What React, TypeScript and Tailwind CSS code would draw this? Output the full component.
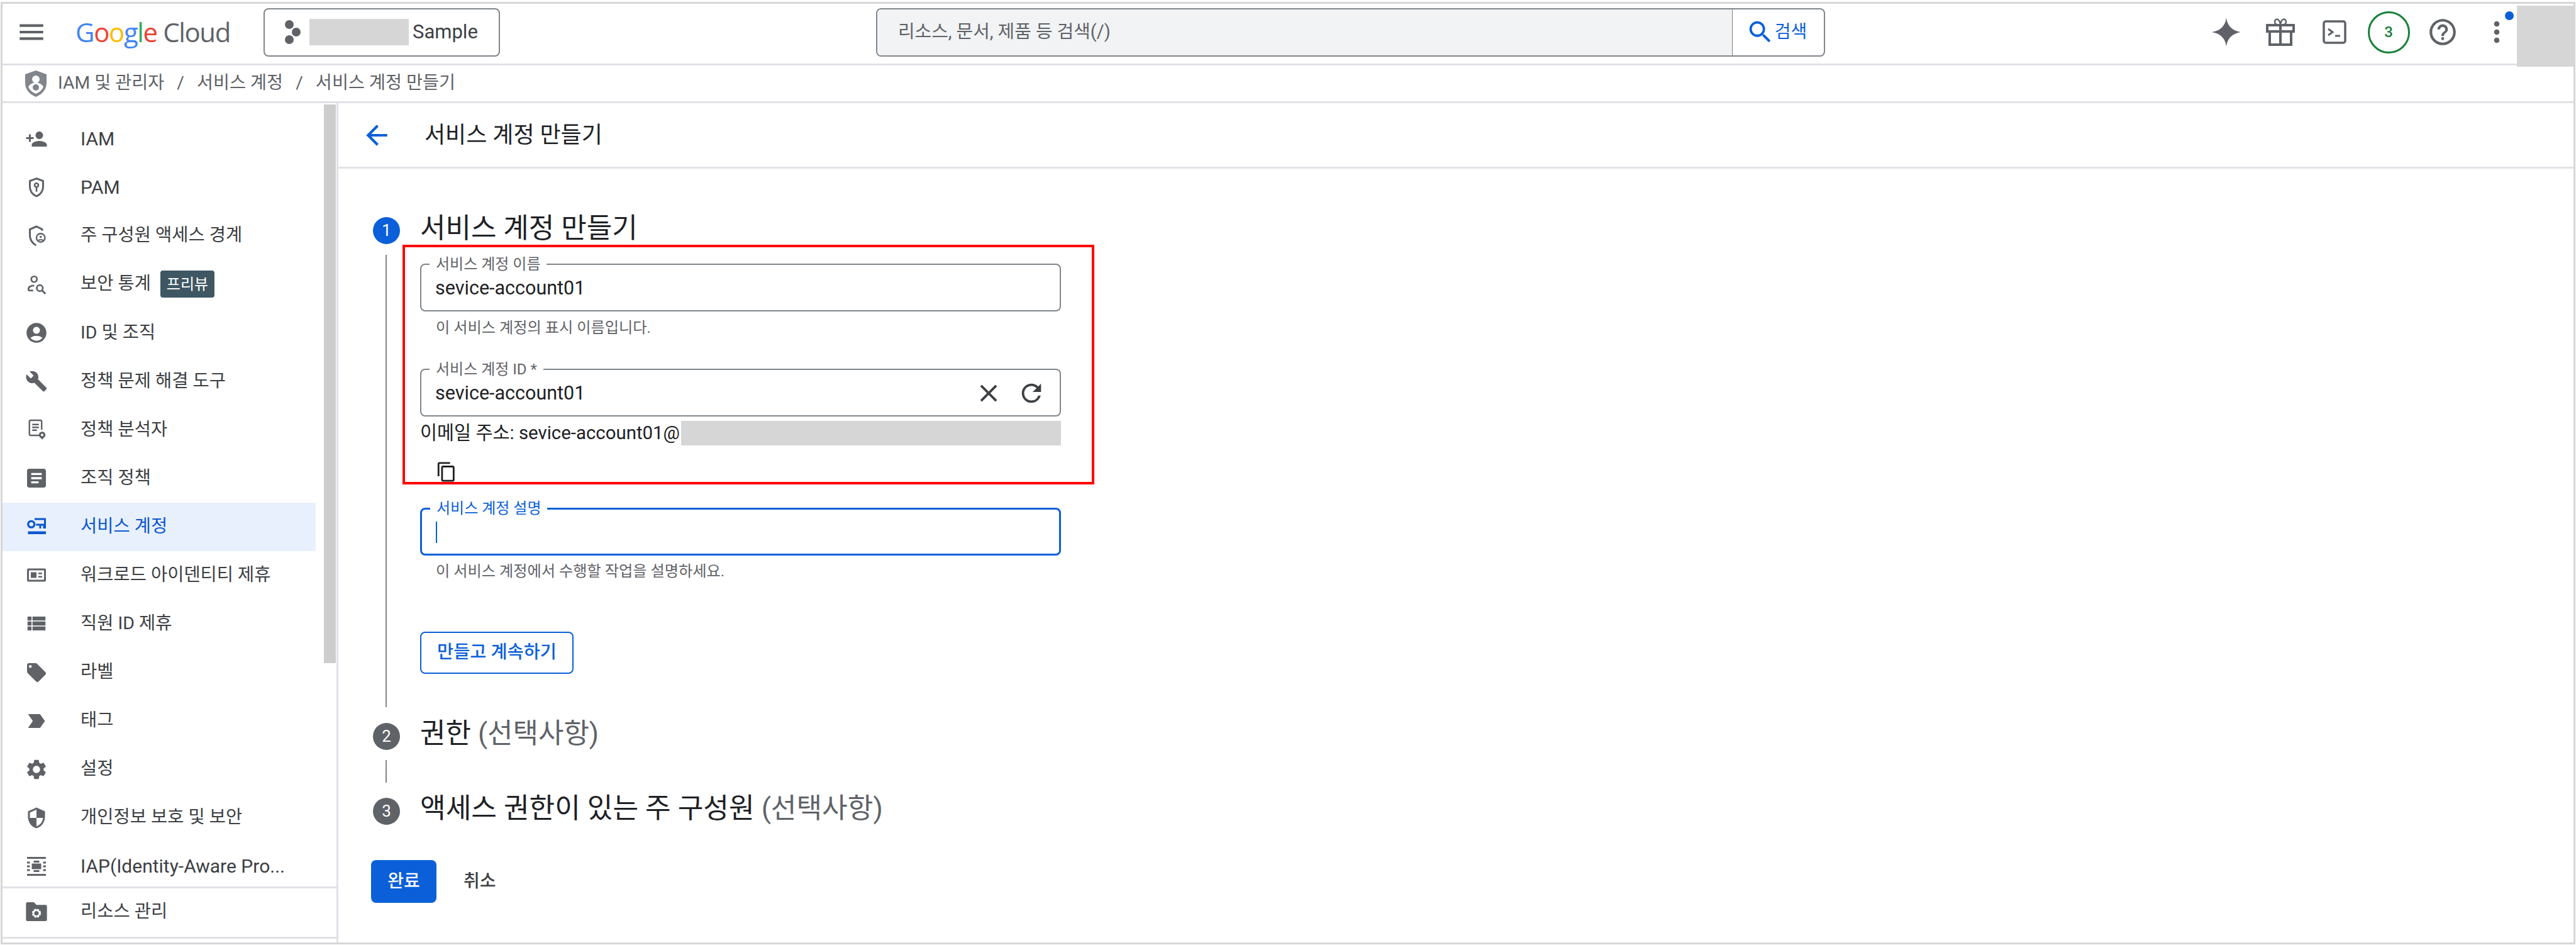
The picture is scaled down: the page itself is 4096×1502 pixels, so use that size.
import type { ReactNode } from 'react';
import {
  MdAccountCircle,
  MdArrowBack,
  MdArticle,
  MdBuild,
  MdClose,
  MdContentCopy,
  MdHelpOutline,
  MdLabelImportant,
  MdLocalOffer,
  MdMenu,
  MdMoreVert,
  MdPersonAdd,
  MdRefresh,
  MdSearch,
  MdSecurity,
  MdSettings,
  MdViewList,
} from 'react-icons/md';

function PamIcon() {
  return (
    <svg viewBox="0 0 24 24" className="w-[36px] h-[36px]" fill="none" stroke="#5f6368">
      <path d="M12 2.5l7 2.6v6.2c0 4.4-2.9 8.5-7 10-4.100-1.500-7-5.600-7-10V5.100z" strokeWidth="2" />
      <circle cx="12" cy="9.500" r="2" strokeWidth="1.800" />
      <path d="M12 11.500v5" strokeWidth="1.800" />
    </svg>
  );
}

function BoundaryIcon() {
  return (
    <svg viewBox="0 0 24 24" className="w-[36px] h-[36px]" fill="none" stroke="#5f6368" strokeWidth="2">
      <path d="M18 6.500V5l-6-3-7 3v6.500c0 4.500 2.500 8 6.500 10.500" />
      <circle cx="16.500" cy="14" r="4.500" strokeWidth="1.600" />
      <circle cx="16.500" cy="13" r="1.200" fill="#5f6368" strokeWidth="0" />
      <path d="M14 17c.5-1.300 4.500-1.300 5 0" strokeWidth="1.400" />
    </svg>
  );
}

function InsightsIcon() {
  return (
    <svg viewBox="0 0 24 24" className="w-[36px] h-[36px]" fill="none" stroke="#5f6368" strokeWidth="1.800">
      <circle cx="9.500" cy="6.500" r="3" />
      <path d="M3.500 18.500v-1.500c0-2.500 3-3.800 6-3.800" />
      <path d="M3.500 18.500h5" />
      <circle cx="15.500" cy="16" r="3.200" />
      <path d="M18 18.500l3.500 3.500" strokeWidth="2" />
    </svg>
  );
}

function AnalyzerIcon() {
  return (
    <svg viewBox="0 0 24 24" className="w-[36px] h-[36px]" fill="none" stroke="#5f6368" strokeWidth="1.600">
      <path d="M15 18H6a1.500 1.500 0 0 1-1.500-1.500v-13A1.500 1.500 0 0 1 6 2h10a1.500 1.500 0 0 1 1.500 1.500V12" />
      <path d="M7.500 6.500h7M7.500 9.500h7M7.500 12.500h5" />
      <circle cx="18" cy="17.500" r="3.500" fill="#5f6368" strokeWidth="0" />
      <path d="M18 22.500l-2-2.500h4z" fill="#5f6368" strokeWidth="0" />
      <circle cx="18" cy="17.500" r="1.300" fill="#fff" strokeWidth="0" />
    </svg>
  );
}

function ServiceAccountIcon() {
  return (
    <svg viewBox="0 0 24 24" className="w-[36px] h-[36px]" fill="#0b57d0">
      <path d="M10 3h12v11h-3v-3h-2v3h-2v-3h-3.500V9H20V5H10z" />
      <circle cx="6.500" cy="9.500" r="3.300" fill="none" stroke="#0b57d0" strokeWidth="2.200" />
      <rect x="3" y="17" width="19" height="3" />
    </svg>
  );
}

function WorkloadIcon() {
  return (
    <svg viewBox="0 0 24 24" className="w-[36px] h-[36px]" fill="#5f6368">
      <path d="M3.500 5h17A1.500 1.500 0 0 1 22 6.500v11a1.500 1.500 0 0 1-1.500 1.500h-17A1.500 1.500 0 0 1 2 17.500v-11A1.500 1.500 0 0 1 3.500 5zM4 7v10h16V7z" fillRule="evenodd" />
      <rect x="6" y="9" width="6" height="6" />
      <rect x="14" y="9.500" width="4" height="1.600" />
      <rect x="14" y="13" width="4" height="1.600" />
    </svg>
  );
}

function IapIcon() {
  return (
    <svg viewBox="0 0 24 24" className="w-[36px] h-[36px]" fill="#5f6368">
      <rect x="2" y="2" width="20" height="2" />
      <rect x="2" y="20" width="20" height="2" />
      <rect x="7" y="9" width="10" height="6" />
      <rect x="2" y="7" width="3" height="2" />
      <rect x="2" y="11" width="3" height="2" />
      <rect x="2" y="15" width="3" height="2" />
      <rect x="19" y="7" width="3" height="2" />
      <rect x="19" y="11" width="3" height="2" />
      <rect x="19" y="15" width="3" height="2" />
      <rect x="9" y="6" width="6" height="2" />
      <rect x="9" y="16" width="6" height="2" />
    </svg>
  );
}

function FolderGearIcon() {
  return (
    <svg viewBox="0 0 24 24" className="w-[40px] h-[40px]" fill="#5f6368">
      <path d="M3.500 3h6l2.500 2.500h8.500A1.500 1.500 0 0 1 22 7v12.500a1.500 1.500 0 0 1-1.500 1.500h-17A1.500 1.500 0 0 1 2 19.500v-15A1.500 1.500 0 0 1 3.500 3z" />
      <circle cx="12" cy="13.500" r="3.300" fill="none" stroke="#fff" strokeWidth="2" strokeDasharray="1.800 .8" />
      <circle cx="12" cy="13.500" r="2.800" fill="none" stroke="#fff" strokeWidth="1.400" />
    </svg>
  );
}

function ShieldCrumbIcon() {
  return (
    <svg viewBox="0 0 36 42" className="w-[36px] h-[42px]">
      <path d="M18 0l17 6v14c0 10-7 18-17 22C8 38 1 30 1 20V6z" fill="#80868b" />
      <circle cx="18" cy="14" r="6" fill="#fff" />
      <path d="M6 26c3-5 7-6.500 12-6.500s9 1.500 12 6.500c-2 5-6 8.500-12 11-6-2.500-10-6-12-11z" fill="#fff" />
      <circle cx="18" cy="27" r="5" fill="#80868b" />
    </svg>
  );
}

const navItems: { label: string; icon: ReactNode; badge?: string; active?: boolean; latin?: boolean }[] = [
  { label: 'IAM', icon: <MdPersonAdd size={36} />, latin: true },
  { label: 'PAM', icon: <PamIcon />, latin: true },
  { label: '주 구성원 액세스 경계', icon: <BoundaryIcon /> },
  { label: '보안 통계', icon: <InsightsIcon />, badge: '프리뷰' },
  { label: 'ID 및 조직', icon: <MdAccountCircle size={38} /> },
  { label: '정책 문제 해결 도구', icon: <MdBuild size={36} /> },
  { label: '정책 분석자', icon: <AnalyzerIcon /> },
  { label: '조직 정책', icon: <MdArticle size={40} /> },
  { label: '서비스 계정', icon: <ServiceAccountIcon />, active: true },
  { label: '워크로드 아이덴티티 제휴', icon: <WorkloadIcon /> },
  { label: '직원 ID 제휴', icon: <MdViewList size={38} /> },
  { label: '라벨', icon: <MdLocalOffer size={36} /> },
  { label: '태그', icon: <MdLabelImportant size={38} /> },
  { label: '설정', icon: <MdSettings size={38} /> },
  { label: '개인정보 보호 및 보안', icon: <MdSecurity size={36} /> },
  { label: 'IAP(Identity-Aware Pro...', icon: <IapIcon />, latin: true },
];

function NavRow({ label, icon, badge, active, latin }: (typeof navItems)[number]) {
  return (
    <div className={`flex items-center h-[77.1px] shrink-0 ${active ? 'bg-[#e8f0fe]' : ''}`}>
      <span className={`w-[40px] ml-[34px] flex justify-center ${active ? 'text-[#0b57d0]' : 'text-[#5f6368]'}`}>{icon}</span>
      <span
        className={`ml-[50px] whitespace-nowrap ${latin ? 'text-[30px]' : 'text-[28.5px]'} ${active ? 'text-[#0b57d0]' : 'text-[#3c4043]'}`}
      >
        {label}
      </span>
      {badge && (
        <span className="ml-[15px] h-[43px] w-[86px] flex items-center justify-center rounded-[4px] bg-[#3f5763] text-white text-[24px]">
          {badge}
        </span>
      )}
    </div>
  );
}

function OutlinedField({
  label,
  focused,
  children,
}: {
  label: string;
  focused?: boolean;
  children?: ReactNode;
}) {
  return (
    <fieldset
      className={`h-[87px] w-[1019px] rounded-[8px] ${focused ? 'border-[3px] border-[#0b5fd9]' : 'border-2 border-[#80868b]'}`}
    >
      <legend className={`ml-[13px] px-[10px] text-[24px] leading-[24px] ${focused ? 'text-[#0b5fd9]' : 'text-[#5f6368]'}`}>
        {label}
      </legend>
      <div className="flex items-center h-[52px] pl-[22px] pr-[22px] text-[30.500px] text-[#202124]">{children}</div>
    </fieldset>
  );
}

function StepBadge({ n, active }: { n: number; active?: boolean }) {
  return (
    <span
      className={`w-[43px] h-[43px] rounded-full flex items-center justify-center text-white text-[26px] ${active ? 'bg-[#0b5fd9]' : 'bg-[#5f6368]'}`}
    >
      {n}
    </span>
  );
}

function TopIcons() {
  return (
    <div className="ml-auto mr-[79px] flex items-center text-[#5f6368]">
      <span className="w-[86px] flex justify-center">
        <svg viewBox="0 0 48 48" className="w-[46px] h-[46px]" fill="#5f6368">
          <path d="M24 0c1.500 13 9 21.500 24 24-15 2.500-22.500 11-24 24-1.500-13-9-21.500-24-24C15 21.500 22.500 13 24 0z" />
        </svg>
      </span>
      <span className="w-[86px] flex justify-center">
        <svg viewBox="0 0 46 46" className="w-[46px] h-[46px]" fill="none" stroke="#5f6368" strokeWidth="4">
          <path d="M2 12h42v10H2zM6 22v21h34V22zM23 12v31" />
          <path d="M23 12c-5 0-9-1-9-5s3-5 5-4 4 5 4 9c0-4 2-8 4-9s5 0 5 4-4 5-9 5z" strokeWidth="2.500" />
        </svg>
      </span>
      <span className="w-[86px] flex justify-center">
        <svg viewBox="0 0 38 38" className="w-[38px] h-[38px]" fill="none" stroke="#5f6368" strokeWidth="3.500">
          <rect x="2" y="2" width="34" height="34" rx="3" />
          <path d="M9 14l7 5-7 5" strokeWidth="3" />
          <path d="M20 25h8" strokeWidth="3" />
        </svg>
      </span>
      <span className="w-[86px] flex justify-center">
        <span className="w-[67px] h-[67px] rounded-full border-[3px] border-[#188038] flex items-center justify-center text-[#188038] text-[24px] font-medium">
          3
        </span>
      </span>
      <span className="w-[86px] flex justify-center">
        <MdHelpOutline size={50} />
      </span>
      <span className="w-[86px] flex justify-center relative">
        <MdMoreVert size={52} />
        <span className="absolute left-[56px] top-[-7px] w-[14px] h-[14px] rounded-full bg-[#0b5fd9]" />
      </span>
    </div>
  );
}

export default function App() {
  return (
    <div className="w-[4096px] h-[1502px] pt-[3px] px-px pb-px bg-white font-['Roboto','Noto_Sans_CJK_KR',sans-serif] overflow-hidden">
      <div className="h-full border-[3px] border-[#d6d6d6] flex flex-col">
        {/* top bar */}
        <header className="relative h-[98px] shrink-0 border-b-[3px] border-[#e0e2e6] flex items-center pb-[5px]">
          <MdMenu size={50} className="ml-[21px] text-[#5f6368]" />
          <div className="ml-[45px] w-[250px] whitespace-nowrap text-[42px] tracking-[-1.400px] leading-none font-['Open_Sans',sans-serif]">
            <span className="text-[#4285f4]">G</span>
            <span className="text-[#ea4335]">o</span>
            <span className="text-[#fbbc04]">o</span>
            <span className="text-[#4285f4]">g</span>
            <span className="text-[#34a853]">l</span>
            <span className="text-[#ea4335]">e</span>
            <span className="text-[#5f6368]"> Cloud</span>
          </div>
          <div className="ml-[49px] w-[376px] h-[77px] rounded-[8px] border-2 border-[#80868b] flex items-center">
            <svg viewBox="0 0 28 40" className="ml-[30px] w-[28px] h-[40px] shrink-0" fill="#5f6368">
              <circle cx="9" cy="8" r="7" />
              <circle cx="20" cy="20" r="7" />
              <circle cx="9" cy="32" r="7" />
            </svg>
            <span className="ml-[13px] w-[158px] h-[42px] bg-[#d6d6d6] shrink-0" />
            <span className="ml-[6px] text-[31px] text-[#3c4043]">Sample</span>
          </div>
          <div className="ml-[598px] w-[1509px] h-[77px] rounded-[8px] border-2 border-[#80868b] flex overflow-hidden">
            <div className="flex-1 bg-[#f1f3f4] flex items-center pl-[33px] text-[28.900px] text-[#5f6368] border-r border-[#80868b]">
              리소스, 문서, 제품 등 검색(/)
            </div>
            <div className="w-[145px] pr-[6px] flex items-center justify-center text-[#0b5fd9] text-[28px]">
              <MdSearch size={46} />
              <span>검색</span>
            </div>
          </div>
          <TopIcons />
          <div className="absolute right-0 top-[3px] w-[90px] h-[97px] bg-[#d6d6d6]" />
        </header>

        {/* breadcrumb */}
        <div className="h-[60px] shrink-0 border-b-[3px] border-[#e0e2e6] flex items-center pl-[35px] text-[28.300px] text-[#5f6368] whitespace-nowrap">
          <ShieldCrumbIcon />
          <span className="ml-[17px]">IAM 및 관리자</span>
          <span className="mx-[20px]">/</span>
          <span>서비스 계정</span>
          <span className="mx-[20px]">/</span>
          <span>서비스 계정 만들기</span>
        </div>

        <div className="flex-1 flex min-h-0">
          {/* side nav */}
          <aside className="w-[534px] shrink-0 border-r-[3px] border-[#e0e2e6] flex flex-col">
            <div className="h-[1245px] shrink-0 flex overflow-hidden">
              <nav className="w-[498px] pt-[18px] flex flex-col">
                {navItems.map((item) => (
                  <NavRow key={item.label} {...item} />
                ))}
              </nav>
              <div className="ml-[13px] mt-[2px] w-[19px] h-[888px] bg-[#cdcdcd]" />
            </div>
            <div className="h-[83px] shrink-0 border-y-[3px] border-[#e0e2e6] flex items-center pb-[3px] text-[28.500px] text-[#3c4043]">
              <span className="w-[40px] ml-[34px] flex justify-center">
                <FolderGearIcon />
              </span>
              <span className="ml-[50px]">리소스 관리</span>
            </div>
          </aside>

          {/* main */}
          <main className="flex-1 min-w-0">
            <div className="h-[104px] border-b-[3px] border-[#e0e2e6] flex items-center pl-[36px]">
              <MdArrowBack size={50} className="text-[#0b5fd9]" />
              <h1 className="ml-[51px] text-[36px] text-[#202124]">서비스 계정 만들기</h1>
            </div>

            <div className="pl-[55px]">
              <div className="mt-[62px] flex h-[60px]">
                <div className="w-[75px] pt-[15px]">
                  <StepBadge n={1} active />
                </div>
                <h2 className="pt-[3px] text-[44px] leading-[60px] text-[#202124]">서비스 계정 만들기</h2>
              </div>

              <div className="mt-[15px] flex">
                <div className="w-[75px] shrink-0">
                  <div className="ml-[20px] w-[2px] h-full bg-[#80868b]" />
                </div>
                <div className="relative pt-[3px] pb-[53px]">
                  <OutlinedField label="서비스 계정 이름">sevice-account01</OutlinedField>
                  <p className="mt-[10px] pl-[25px] text-[24.200px] leading-[32px] text-[#5f6368]">이 서비스 계정의 표시 이름입니다.</p>
                  <div className="mt-[38px]">
                    <OutlinedField label="서비스 계정 ID *">
                      <span>sevice-account01</span>
                      <MdClose size={46} className="ml-auto text-[#3c4043]" />
                      <MdRefresh size={46} className="ml-[22px] text-[#3c4043]" />
                    </OutlinedField>
                  </div>
                  <div className="mt-[7px] h-[39px] flex items-center text-[29.400px] text-[#202124] whitespace-nowrap">
                    <span className="w-[415px] shrink-0">이메일 주소: sevice-account01@</span>
                    <span className="w-[604px] h-full bg-[#d6d6d6]" />
                  </div>
                  <div className="mt-[25px] pl-[25px]">
                    <MdContentCopy size={34} className="text-[#202124]" />
                  </div>
                  <div className="mt-[29px]">
                    <OutlinedField label="서비스 계정 설명" focused>
                      <span className="w-[2px] h-[34px] bg-[#0b5fd9]" />
                    </OutlinedField>
                  </div>
                  <p className="mt-[9px] pl-[25px] text-[24.200px] leading-[32px] text-[#5f6368]">
                    이 서비스 계정에서 수행할 작업을 설명하세요.
                  </p>
                  <button className="mt-[80px] w-[244px] h-[67px] rounded-[8px] border-2 border-[#0b5fd9] text-[#0b5fd9] text-[28.400px] font-medium flex items-center justify-center">
                    만들고 계속하기
                  </button>
                  {/* annotation box over the form */}
                  <div className="absolute left-[-28px] top-[-16px] w-[1100px] h-[381px] border-4 border-[#ff0000] pointer-events-none" />
                </div>
              </div>

              <div className="mt-[12px] flex h-[60px]">
                <div className="w-[75px] pt-[13px]">
                  <StepBadge n={2} />
                </div>
                <h2 className="text-[44px] leading-[60px] text-[#202124]">
                  권한 <span className="text-[#5f6368]">(선택사항)</span>
                </h2>
              </div>
              <div className="mt-[12px] ml-[20px] w-[2px] h-[36px] bg-[#80868b]" />
              <div className="mt-[11px] flex h-[60px]">
                <div className="w-[75px] pt-[13px]">
                  <StepBadge n={3} />
                </div>
                <h2 className="text-[44.200px] leading-[60px] text-[#202124]">
                  액세스 권한이 있는 주 구성원 <span className="text-[#5f6368]">(선택사항)</span>
                </h2>
              </div>

              <div className="mt-[52px] -ml-[3px] flex items-center text-[28px]">
                <button className="w-[104px] h-[68px] rounded-[8px] bg-[#0b5fd9] text-white font-medium flex items-center justify-center">
                  완료
                </button>
                <button className="ml-[43px] text-[#3c4043] font-medium">취소</button>
              </div>
            </div>
          </main>
        </div>
      </div>
    </div>
  );
}
